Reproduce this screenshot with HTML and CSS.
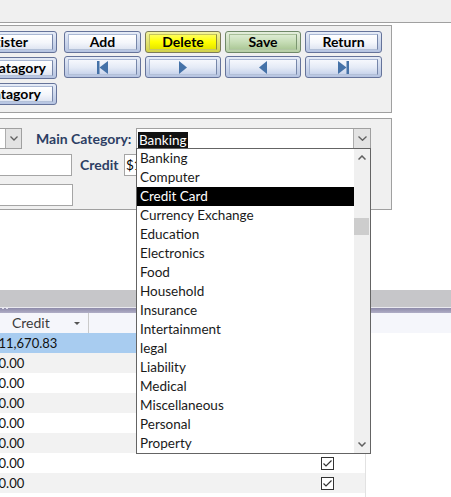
FILE: index.html
```html
<!DOCTYPE html>
<html>
<head>
<meta charset="utf-8">
<link rel="stylesheet" href="styles.css">
</head>
<body>
<div class="screen">
  <div class="topbar"></div>

  <div class="panel panel-buttons">
    <div class="side-col">
      <div class="btn"><div class="face side-face pr-25">Register</div></div>
      <div class="btn"><div class="face side-face pr-7">Catagory</div></div>
      <div class="btn"><div class="face side-face pr-12">Catagory</div></div>
    </div>
    <div class="btn-grid">
      <div class="btn"><div class="face">Add</div></div>
      <div class="btn yellow"><div class="face">Delete</div></div>
      <div class="btn green"><div class="face">Save</div></div>
      <div class="btn"><div class="face">Return</div></div>
      <div class="btn nav"><div class="face">
        <svg width="12" height="13" viewBox="0 0 12 13"><rect x="0" y="0" width="2.5" height="13" fill="#4572a8"/><polygon points="2.5,6.5 11,0 11,13" fill="#4572a8"/></svg>
      </div></div>
      <div class="btn nav"><div class="face">
        <svg width="8" height="13" viewBox="0 0 8 13"><polygon points="0,0 8,6.5 0,13" fill="#4572a8"/></svg>
      </div></div>
      <div class="btn nav"><div class="face">
        <svg width="8" height="13" viewBox="0 0 8 13"><polygon points="8,0 0,6.5 8,13" fill="#4572a8"/></svg>
      </div></div>
      <div class="btn nav"><div class="face">
        <svg width="12" height="13" viewBox="0 0 12 13"><polygon points="0,0 8.5,6.5 0,13" fill="#4572a8"/><rect x="8.5" y="0" width="2.5" height="13" fill="#4572a8"/></svg>
      </div></div>
    </div>
  </div>

  <div class="panel panel-form">
    <div class="form-row row-a">
      <div class="combo stub">
        <div class="combo-text"></div>
        <div class="combo-btn"><svg width="8" height="5" viewBox="0 0 8 5"><polyline points="0.5,0.5 4,4 7.5,0.5" fill="none" stroke="#606060" stroke-width="1.3"/></svg></div>
      </div>
      <div class="lbl lbl-main">Main Category:</div>
      <div class="combo main">
        <div class="combo-text"><span class="sel">Banking</span></div>
        <div class="combo-btn"><svg width="9" height="5" viewBox="0 0 9 5"><polyline points="0.5,0.5 4.5,4.3 8.5,0.5" fill="none" stroke="#606060" stroke-width="1.3"/></svg></div>
      </div>
    </div>
    <div class="form-row row-b">
      <div class="tbox tb1"></div>
      <div class="lbl lbl-credit">Credit</div>
      <div class="tbox tb-credit">$11,670.83</div>
    </div>
    <div class="form-row row-c">
      <div class="tbox tb2"></div>
    </div>
  </div>

  <div class="blank"></div>

  <div class="sheet">
    <div class="sheet-bar"></div>
    <div class="splitter"><span class="dots"></span></div>
    <div class="sheet-head">
      <div class="hcell hcredit">Credit<span class="harrow"></span></div>
      <div class="hcell hrest"></div>
    </div>
    <div class="rows">
      <div class="row sel-row"><div class="cell amt">$11,670.83</div><div class="cell chk"><span class="cbox"></span></div></div>
      <div class="row"><div class="cell amt">$0.00</div><div class="cell chk"><span class="cbox"></span></div></div>
      <div class="row"><div class="cell amt">$0.00</div><div class="cell chk"><span class="cbox"></span></div></div>
      <div class="row"><div class="cell amt">$0.00</div><div class="cell chk"><span class="cbox"></span></div></div>
      <div class="row"><div class="cell amt">$0.00</div><div class="cell chk"><span class="cbox"></span></div></div>
      <div class="row"><div class="cell amt">$0.00</div><div class="cell chk"><span class="cbox"></span></div></div>
      <div class="row"><div class="cell amt">$0.00</div><div class="cell chk"><span class="cbox"><svg width="11" height="11" viewBox="0 0 11 11"><polyline points="1.5,5.5 4,8 9.5,2.5" fill="none" stroke="#333" stroke-width="1.2"/></svg></span></div></div>
      <div class="row"><div class="cell amt">$0.00</div><div class="cell chk"><span class="cbox"><svg width="11" height="11" viewBox="0 0 11 11"><polyline points="1.5,5.5 4,8 9.5,2.5" fill="none" stroke="#333" stroke-width="1.2"/></svg></span></div></div>
      <div class="row"><div class="cell amt">$0.00</div><div class="cell chk"><span class="cbox"></span></div></div>
    </div>
  </div>

  <div class="dropdown">
    <div class="items">
      <div class="item">Banking</div>
      <div class="item">Computer</div>
      <div class="item hl">Credit Card</div>
      <div class="item">Currency Exchange</div>
      <div class="item">Education</div>
      <div class="item">Electronics</div>
      <div class="item">Food</div>
      <div class="item">Household</div>
      <div class="item">Insurance</div>
      <div class="item">Intertainment</div>
      <div class="item">legal</div>
      <div class="item">Liability</div>
      <div class="item">Medical</div>
      <div class="item">Miscellaneous</div>
      <div class="item">Personal</div>
      <div class="item">Property</div>
    </div>
    <div class="vscroll">
      <div class="sb-btn"><svg width="8" height="5" viewBox="0 0 8 5"><polyline points="0.5,4.5 4,1 7.5,4.5" fill="none" stroke="#606060" stroke-width="1.5"/></svg></div>
      <div class="sb-track"><div class="sb-thumb"></div></div>
      <div class="sb-btn"><svg width="8" height="5" viewBox="0 0 8 5"><polyline points="0.5,0.5 4,4 7.5,0.5" fill="none" stroke="#606060" stroke-width="1.5"/></svg></div>
    </div>
  </div>
</div>
</body>
</html>
```

FILE: styles.css
```css
* { box-sizing: border-box; }
html, body { margin: 0; padding: 0; }
body {
  width: 451px;
  height: 497px;
  overflow: hidden;
  background: #ffffff;
  font-family: Lato, "Liberation Sans", sans-serif;
}
.screen {
  position: relative;
  width: 451px;
  height: 497px;
  overflow: hidden;
}
.topbar {
  height: 23px;
  background: #f0f0f0;
  border-bottom: 1px solid #a0a0a0;
}
.panel {
  width: 392px;
  background: #f0f0f0;
  border: 1px solid #a0a0a0;
  border-left: none;
}
.panel-buttons {
  margin-top: 2px;
  height: 88px;
  padding-top: 5px;
  display: flex;
  align-items: flex-start;
}
.side-col {
  margin-left: -33px;
  width: 90px;
  display: flex;
  flex-direction: column;
  gap: 4px;
}
.btn-grid {
  margin-left: 7px;
  display: grid;
  grid-template-columns: 77px 76px 76px 77px;
  grid-auto-rows: 22px;
  column-gap: 4px;
  row-gap: 3px;
}
.btn {
  height: 22px;
  border: 1px solid #65739a;
  border-radius: 3px;
  padding: 2px 3px;
  background: linear-gradient(#e6ecf7, #b6c4e1);
}
.face {
  height: 100%;
  border: 1px solid;
  border-color: #aab8d4 #7686a9 #b3c0d8 #aab8d4;
  background: linear-gradient(#ffffff 0%, #f4f6fb 55%, #dfe5f2 100%);
  display: flex;
  align-items: center;
  justify-content: center;
  font-weight: 700;
  font-size: 14px;
  color: #000;
  line-height: 1;
  white-space: nowrap;
  overflow: hidden;
}
.side-face { justify-content: flex-end; }
.pr-25 { padding-right: 24px; }
.pr-7 { padding-right: 6px; }
.pr-12 { padding-right: 11px; }
.nav .face {
  background: linear-gradient(#f6f8fd 0%, #e4eaf6 55%, #c9d4ec 100%);
}
.btn.yellow {
  border-color: #7c7c58;
  background: linear-gradient(#f4f49c, #d2d24a);
}
.yellow .face {
  border-color: #c4c45a #8e8e3c #c8c860 #c4c45a;
  background: linear-gradient(#ffff5a 0%, #ffff00 50%, #e6e600 100%);
}
.btn.green {
  border-color: #6f8868;
  background: linear-gradient(#e4eedc, #b7cfa6);
}
.green .face {
  border-color: #a7bf98 #7b9670 #b0c6a2 #a7bf98;
  background: linear-gradient(#dcebd2 0%, #c6ddb6 50%, #adc998 100%);
}

.panel-form {
  margin-top: 5px;
  height: 92px;
  padding-top: 9px;
}
.form-row { display: flex; align-items: stretch; }
.row-a { height: 21px; }
.row-b { height: 22px; margin-top: 5px; }
.row-c { height: 22px; margin-top: 8px; }

.combo {
  display: flex;
  background: #ffffff;
  border: 1px solid #a0a0a0;
}
.combo-text { flex: 1; overflow: hidden; }
.combo-btn {
  width: 17px;
  background: #e3e3e3;
  border-left: 1px solid #adadad;
  display: flex;
  align-items: center;
  justify-content: center;
}
.stub { margin-left: -60px; width: 82px; }
.stub .combo-btn { width: 16px; }
.main { width: 235px; }
.sel {
  display: inline-block;
  margin-left: 1px;
  padding: 0 1px;
  height: 17px;
  line-height: 17px;
  font-size: 13.5px;
  background: #111;
  color: #fff;
}
.lbl {
  font-weight: 700;
  font-size: 14px;
  color: #2d3e64;
  line-height: 21px;
  white-space: nowrap;
}
.lbl-main { margin-left: 14px; width: 100px; }
.lbl-credit { margin-left: 8px; width: 44px; }
.tbox {
  background: #ffffff;
  border: 1px solid #a5a5a5;
  font-size: 13.5px;
  line-height: 20px;
  padding-left: 1px;
  overflow: hidden;
  white-space: nowrap;
}
.tb1 { margin-left: -20px; width: 92px; }
.tb2 { margin-left: -20px; width: 93px; }
.tb-credit { width: 70px; }

.blank { height: 80px; }

.sheet-bar { height: 17px; background: #c6c6c9; }
.splitter {
  height: 6px;
  border-top: 1px solid #e9e9ef;
  background: linear-gradient(#8d8aa9, #b0aec6);
}
.dots {
  display: block;
  margin: 0 0 0 2px;
  width: 7px;
  height: 1px;
  background: repeating-linear-gradient(90deg, #e4e4ee 0 2px, transparent 2px 4px);
}
.sheet-head {
  height: 20px;
  display: flex;
  background: #f5f6fb;
}
.hcell {
  height: 20px;
  line-height: 20px;
  font-size: 14px;
  color: #3c3c3c;
}
.hcredit {
  width: 89px;
  padding-left: 12px;
  padding-right: 8px;
  border-right: 1px solid #cacaca;
  display: flex;
  align-items: center;
}
.harrow {
  margin-left: auto;
  width: 0;
  height: 0;
  border-left: 3px solid transparent;
  border-right: 3px solid transparent;
  border-top: 3px solid #555;
}
.hrest { flex: 1; }

.row {
  display: flex;
  width: 366px;
  height: 20px;
  border-right: 1px solid #e2e2e2;
  background: #ffffff;
}
.row:nth-child(even) { background: #f2f2f2; }
.row.sel-row { background: #a8ccf0; }
.cell {
  font-size: 13px;
  line-height: 20px;
  color: #111;
  white-space: nowrap;
}
.amt { width: 321px; text-indent: -9px; overflow: hidden; }
.chk { display: flex; align-items: center; }
.cbox {
  width: 13px;
  height: 13px;
  border: 1px solid #333;
  background: #fff;
  display: block;
}
.cbox svg { display: block; }

.dropdown {
  position: absolute;
  left: 136px;
  top: 148px;
  width: 235px;
  height: 306px;
  border: 1px solid #646464;
  background: #ffffff;
  display: flex;
}
.items { flex: 1; }
.item {
  height: 19px;
  line-height: 19px;
  padding-left: 3px;
  font-size: 13.5px;
  color: #1a1a1a;
  white-space: nowrap;
  overflow: hidden;
}
.item.hl { background: #000; color: #fff; }
.vscroll {
  width: 16px;
  background: #f0f0f0;
  display: flex;
  flex-direction: column;
}
.sb-btn {
  height: 17px;
  display: flex;
  align-items: center;
  justify-content: center;
}
.sb-track { flex: 1; padding-top: 52px; }
.sb-thumb { height: 17px; background: #cdcdcd; margin: 0 1px 0 0; }
```
